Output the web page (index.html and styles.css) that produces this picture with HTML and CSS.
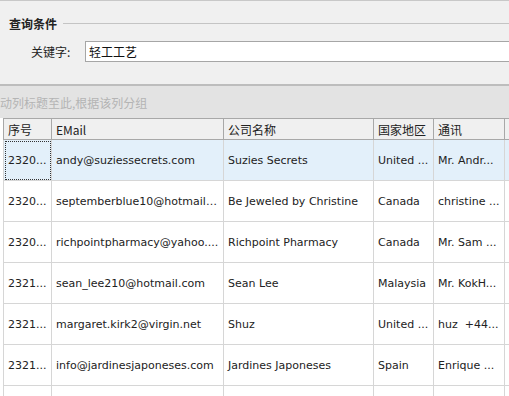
FILE: index.html
```
<!DOCTYPE html>
<html lang="zh-CN">
<head>
  <meta charset="UTF-8">
  <title>客户查询</title>
  <link rel="stylesheet" href="styles.css">
</head>
<body>
  <div class="query">
    <div class="legend"><span>查询条件</span><i></i></div>
    <div class="field">
      <label for="kw">关键字:</label>
      <input id="kw" type="text" value="轻工工艺">
    </div>
  </div>

  <div class="group-panel"><span>动列标题至此,根据该列分组</span></div>

  <div class="grid">
    <table>
      <colgroup>
        <col class="c-no"><col class="c-mail"><col class="c-name"><col class="c-country"><col class="c-contact"><col>
      </colgroup>
      <thead>
        <tr><th>序号</th><th>EMail</th><th>公司名称</th><th>国家地区</th><th>通讯</th><th></th></tr>
      </thead>
      <tbody>
        <tr class="selected"><td class="focus">2320...</td><td>andy@suziessecrets.com</td><td>Suzies Secrets</td><td>United ...</td><td>Mr. Andr...</td><td></td></tr>
        <tr><td>2320...</td><td>septemberblue10@hotmail....</td><td>Be Jeweled by Christine</td><td>Canada</td><td>christine ...</td><td></td></tr>
        <tr><td>2320...</td><td>richpointpharmacy@yahoo....</td><td>Richpoint Pharmacy</td><td>Canada</td><td>Mr. Sam ...</td><td></td></tr>
        <tr><td>2321...</td><td>sean_lee210@hotmail.com</td><td>Sean Lee</td><td>Malaysia</td><td>Mr. KokH...</td><td></td></tr>
        <tr><td>2321...</td><td>margaret.kirk2@virgin.net</td><td>Shuz</td><td>United ...</td><td>huz&nbsp; +44...</td><td></td></tr>
        <tr><td>2321...</td><td>info@jardinesjaponeses.com</td><td>Jardines Japoneses</td><td>Spain</td><td>Enrique ...</td><td></td></tr>
        <tr><td></td><td></td><td></td><td></td><td></td><td></td></tr>
      </tbody>
    </table>
  </div>
</body>
</html>
```

FILE: styles.css
```
html, body { margin: 0; padding: 0; }
body { width: 509px; height: 396px; overflow: hidden; background: #f0f0f0; font-family: "DejaVu Sans", "Noto Sans CJK SC", sans-serif; font-size: 11px; color: #222; }

.query { height: 86px; box-sizing: border-box; border-top: 1px solid #c8c8c8; border-bottom: 2px solid #bdbdbd; }
.legend { display: flex; align-items: center; height: 22px; margin-top: 11px; padding-left: 9px; }
.legend span { font-family: "Noto Sans CJK SC", sans-serif; font-weight: bold; font-size: 12px; color: #222; }
.legend i { flex: 1; height: 1px; background: #c4c4c4; margin-left: 6px; }
.field { display: flex; align-items: center; margin-top: 7px; padding-left: 31px; }
.field label { font-family: "Noto Sans CJK SC", sans-serif; font-size: 12px; width: 54px; }
.field input { flex: 1; height: 21px; box-sizing: border-box; border: 1px solid #a6a6a6; border-right: none; padding: 0 3px; font-family: "Noto Sans CJK SC", sans-serif; font-size: 12px; color: #111; outline: none; }

.group-panel { height: 32px; background: #e3e3e3; display: flex; align-items: center; overflow: hidden; }
.group-panel span { font-family: "Noto Sans CJK SC", sans-serif; font-size: 12px; color: #b4b4b4; white-space: nowrap; }

.grid { padding-left: 3px; background: #fff; }
table { border-collapse: collapse; table-layout: fixed; width: 520px; }
.c-no { width: 48px; }
.c-mail { width: 172px; }
.c-name { width: 150px; }
.c-country { width: 60px; }
.c-contact { width: 71px; }
th, td { white-space: nowrap; overflow: hidden; text-overflow: ellipsis; text-align: left; padding: 0 4px; }
th { height: 20px; background: #f0f0f0; font-family: "Noto Sans CJK SC", sans-serif; font-weight: normal; font-size: 12px; border: 1px solid #a8a8a8; }
td { height: 40px; border: 1px solid #d6d6d6; font-size: 11px; }
tr.selected td { background: #e3f0fa; }
td.focus { outline: 1px dotted #333; outline-offset: -2px; }
```
